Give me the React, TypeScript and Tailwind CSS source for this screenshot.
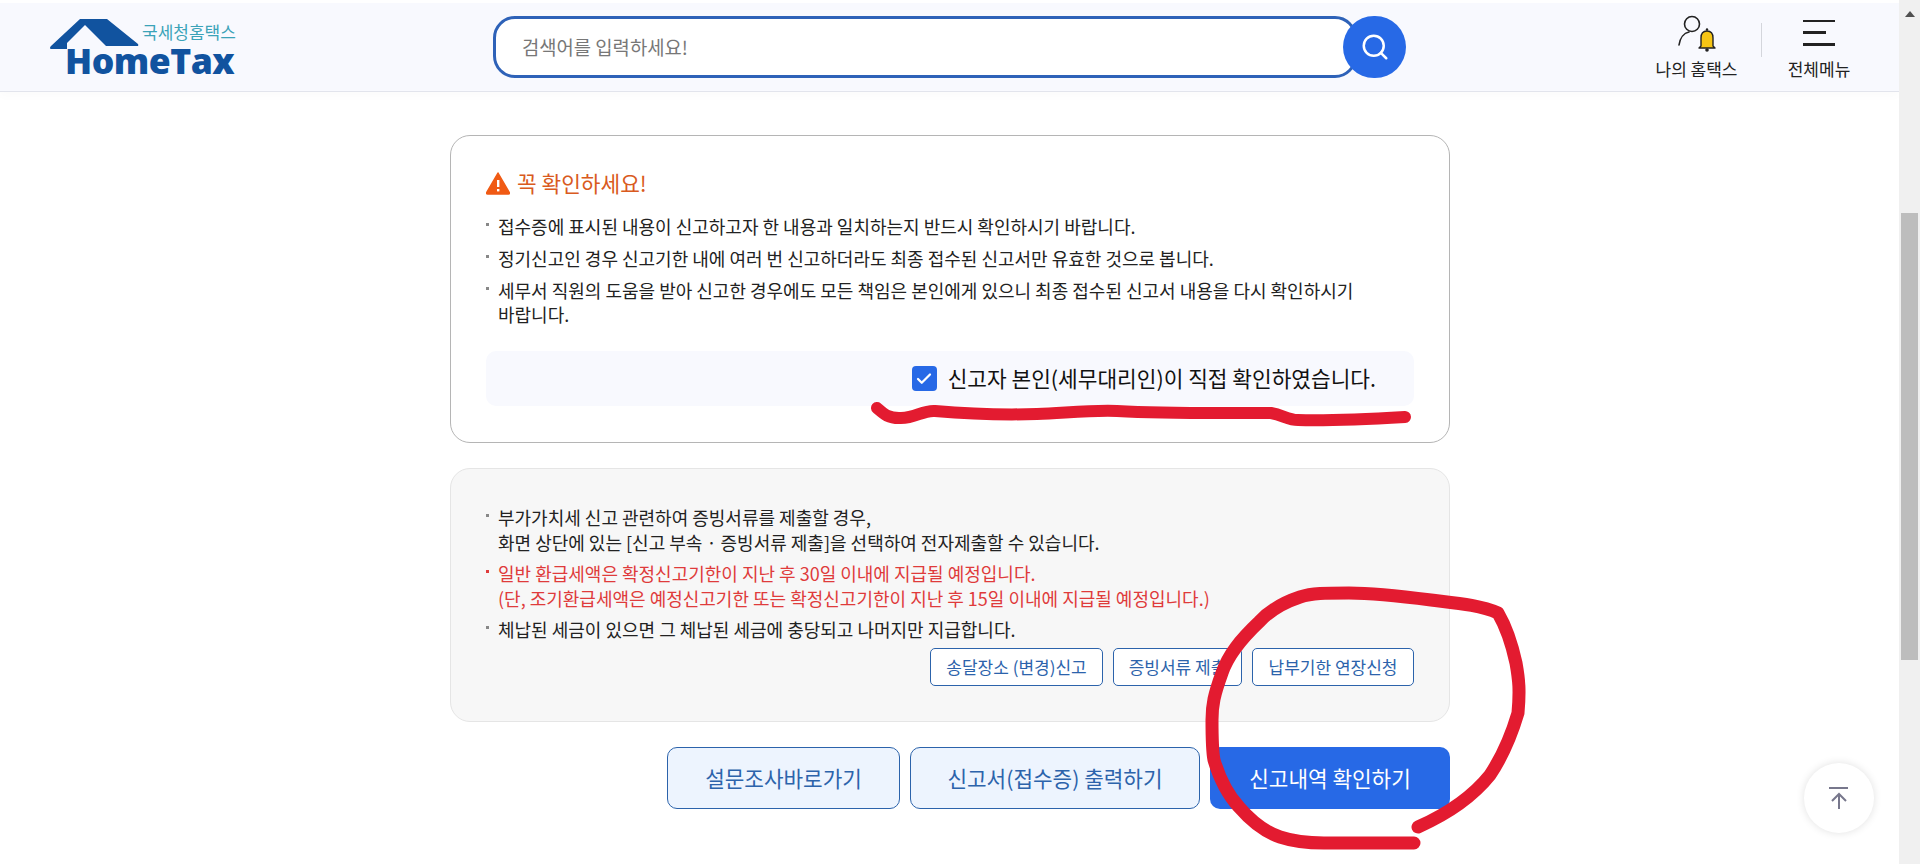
import { Check, Search } from "lucide-react";

function Logo() {
  return (
    <div className="relative w-[190px] h-[60px] shrink-0">
      <svg className="absolute left-0 top-0" width="100" height="40" viewBox="0 0 100 40">
        <path d="M0 31 Q0 30 1 29 L30 2 L57 2 L88 27 Q89 29 87 29 L56 29 L35 8 L17 26 L17 32 L1 32 Q0 32 0 31Z" fill="#11539f" />
      </svg>
      <span className="absolute left-[15px] top-[30px] text-[35.5px] leading-[26px] font-extrabold text-[#11539f] font-['Open_Sans',sans-serif] tracking-[-0.5px] whitespace-nowrap">
        HomeTax
      </span>
      <span className="absolute left-[92px] top-[6px] text-[17px] leading-[18px] text-[#3ba3b8] font-['Noto_Sans_CJK_KR',sans-serif] whitespace-nowrap">
        국세청홈택스
      </span>
    </div>
  );
}

function UserBell() {
  return (
    <svg width="40" height="40" viewBox="0 0 40 40" fill="none">
      <circle cx="15" cy="9" r="7.5" stroke="#222" strokeWidth="1.6" />
      <path d="M2 30 C3 23 7 18 12 17" stroke="#222" strokeWidth="1.6" strokeLinecap="round" />
      <path d="M24 31 L24 23 C24 18 27 16 30 16 C33 16 36 18 36 23 L36 31 L38 33 L22 33Z" fill="#f6c515" stroke="#222" strokeWidth="1.4" strokeLinejoin="round" />
      <circle cx="30" cy="14.5" r="1.2" fill="#222" />
      <circle cx="30" cy="35" r="1.8" fill="#222" />
    </svg>
  );
}

function Bullet({ children, red }: { children: React.ReactNode; red?: boolean }) {
  return (
    <li className={`flex ${red ? "text-[#df3b3b]" : "text-[#222]"}`}>
      <span className={`w-[3px] h-[3px] mt-[9px] mr-[9px] shrink-0 ${red ? "bg-[#df3b3b]" : "bg-[#888]"}`} />
      <span>{children}</span>
    </li>
  );
}

function SmallBtn({ label, w }: { label: string; w: string }) {
  return (
    <button className={`${w} h-[38px] rounded-[5px] border border-[#2c63ab] bg-white text-[#2c63ab] text-[17px] leading-[20px] whitespace-nowrap`}>
      {label}
    </button>
  );
}

function Scribbles() {
  return (
    <svg className="absolute left-0 top-0 pointer-events-none" width="1899" height="864" fill="none" stroke="#e31b30" strokeLinecap="round" strokeLinejoin="round">
      <path strokeWidth="12" d="M877 408 C884 414 888 418 899 418 C915 419 922 410 935 411 C970 414 1005 415 1037 414 C1065 413 1090 410 1117 411 C1170 414 1225 413 1271 413 C1283 415 1288 420 1298 420 C1335 421 1370 419 1405 417" />
      <path strokeWidth="13" d="M1418 827 C1445 815 1470 800 1490 775 C1500 760 1510 740 1518 713 C1520 690 1519 680 1516 663 C1511 640 1505 625 1498 613 C1480 605 1455 603 1431 600 C1400 596 1375 593 1349 593 C1325 593 1312 593 1300 597 C1282 603 1270 610 1259 622 C1240 640 1228 655 1222 673 C1214 695 1212 705 1212 720 C1212 735 1212 750 1214 760 C1220 780 1228 795 1239 807 C1252 822 1265 832 1280 837 C1295 842 1310 843 1324 843 C1355 843 1385 843 1414 843" />
    </svg>
  );
}

export default function App() {
  return (
    <div className="relative flex w-full h-[864px] overflow-hidden bg-white font-['Noto_Sans_CJK_KR',sans-serif] text-[#222]">
      <div className="flex-1 flex flex-col min-w-0">
        {/* 헤더 */}
        <header className="mt-[3px] h-[89px] shrink-0 flex items-center bg-[#f8f9fe] border-b border-[#e2e4ec] shadow-[0_4px_10px_rgba(0,0,0,0.02)] pl-[50px] pr-[50px]">
          <Logo />
          <div className="ml-[253px] relative flex items-center">
            <div className="w-[864px] h-[62px] rounded-[22px] border-[3px] border-[#2e62b8] bg-white flex items-center pl-[26px] text-[18.8px] text-[#777]">
              검색어를 입력하세요!
            </div>
            <div className="-ml-[14px] z-10 w-[63px] h-[62px] rounded-full bg-[#2769e6] flex items-center justify-center">
              <Search size={30} color="#fff" strokeWidth={2} />
            </div>
          </div>
          <div className="ml-auto flex items-start">
            <div className="flex flex-col items-center w-[81px]">
              <UserBell />
              <span className="mt-[3px] text-[17px] leading-[22px] whitespace-nowrap">나의 홈택스</span>
            </div>
            <div className="w-px h-[34px] bg-[#d4d6dc] ml-[24px] mt-[8px]" />
            <div className="flex flex-col items-center w-[60px] ml-[27px]">
              <div className="w-[32px] h-[40px] flex flex-col pt-[5px]">
                <div className="h-[2px] w-[32px] bg-[#222]" />
                <div className="h-[3px] w-[23px] bg-[#222] mt-[9px]" />
                <div className="h-[3px] w-[32px] bg-[#222] mt-[9px]" />
              </div>
              <span className="mt-[3px] text-[17px] leading-[22px] whitespace-nowrap">전체메뉴</span>
            </div>
          </div>
        </header>

        {/* 본문 */}
        <main className="w-[1000px] ml-[450px] pt-[43px] flex flex-col">
          <section className="h-[308px] rounded-[20px] border border-[#b5b5b5] pt-[30px] px-[35px]">
            <h2 className="flex items-center gap-[7px] h-[34px] text-[21.4px] text-[#d95a20]">
              <svg width="24" height="24" viewBox="0 0 24 24">
                <path d="M12 2 L23.5 22 Q23.5 23 22.5 23 L1.5 23 Q0.5 23 0.5 22Z" fill="#f05a14" stroke="#f05a14" strokeWidth="1.5" strokeLinejoin="round" />
                <rect x="11" y="9" width="2.4" height="7" fill="#fff" />
                <rect x="11" y="18" width="2.4" height="2.4" fill="#fff" />
              </svg>
              꼭 확인하세요!
            </h2>
            <ul className="mt-[14px] flex flex-col gap-[8px] text-[18px] leading-[24px]">
              <Bullet>접수증에 표시된 내용이 신고하고자 한 내용과 일치하는지 반드시 확인하시기 바랍니다.</Bullet>
              <Bullet>정기신고인 경우 신고기한 내에 여러 번 신고하더라도 최종 접수된 신고서만 유효한 것으로 봅니다.</Bullet>
              <Bullet>
                세무서 직원의 도움을 받아 신고한 경우에도 모든 책임은 본인에게 있으니 최종 접수된 신고서 내용을 다시 확인하시기
                <br />
                바랍니다.
              </Bullet>
            </ul>
            <div className="mt-[25px] h-[55px] rounded-[10px] bg-[#f8f9fe] flex items-center justify-end pr-[38px] gap-[11px]">
              <div className="w-[25px] h-[25px] rounded-[4px] bg-[#2769e6] flex items-center justify-center">
                <Check size={18} color="#fff" strokeWidth={3} />
              </div>
              <span className="mb-[2px] text-[21.4px] leading-[28px] text-[#111]">신고자 본인(세무대리인)이 직접 확인하였습니다.</span>
            </div>
          </section>

          <section className="mt-[25px] h-[254px] rounded-[20px] border border-[#e5e5e5] bg-[#f7f7f7] pt-[36px] px-[35px]">
            <ul className="flex flex-col gap-[6px] text-[18px] leading-[25px]">
              <Bullet>
                부가가치세 신고 관련하여 증빙서류를 제출할 경우,
                <br />
                화면 상단에 있는 [신고 부속 · 증빙서류 제출]을 선택하여 전자제출할 수 있습니다.
              </Bullet>
              <Bullet red>
                일반 환급세액은 확정신고기한이 지난 후 30일 이내에 지급될 예정입니다.
                <br />
                (단, 조기환급세액은 예정신고기한 또는 확정신고기한이 지난 후 15일 이내에 지급될 예정입니다.)
              </Bullet>
              <Bullet>체납된 세금이 있으면 그 체납된 세금에 충당되고 나머지만 지급합니다.</Bullet>
            </ul>
            <div className="mt-[6px] flex justify-end gap-[10px]">
              <SmallBtn label="송달장소 (변경)신고" w="w-[173px]" />
              <SmallBtn label="증빙서류 제출" w="w-[129px]" />
              <SmallBtn label="납부기한 연장신청" w="w-[162px]" />
            </div>
          </section>

          <div className="mt-[25px] flex justify-end gap-[10px]">
            <button className="w-[233px] h-[62px] rounded-[10px] border border-[#2c63ab] bg-[#edf4fe] text-[#2c63ab] text-[21.3px]">설문조사바로가기</button>
            <button className="w-[290px] h-[62px] rounded-[10px] border border-[#2c63ab] bg-[#edf4fe] text-[#2c63ab] text-[21.3px]">신고서(접수증) 출력하기</button>
            <button className="w-[240px] h-[62px] rounded-[10px] bg-[#2769e6] text-white text-[21.3px]">신고내역 확인하기</button>
          </div>
        </main>
      </div>

      {/* 스크롤바 */}
      <div className="w-[21px] shrink-0 bg-[#f0f0f0] flex flex-col items-center">
        <div className="h-[21px] mt-[3px] w-full flex items-center justify-center">
          <div className="w-0 h-0 border-x-[5px] border-x-transparent border-b-[6px] border-b-[#505050]" />
        </div>
        <div className="mt-[189px] w-[17px] h-[447px] bg-[#bdbdbd]" />
      </div>

      {/* 맨 위로 */}
      <button className="absolute left-[1804px] top-[763px] w-[70px] h-[70px] rounded-full bg-white shadow-[0_0_8px_rgba(0,0,0,0.12)] flex items-center justify-center">
        <svg width="22" height="24" viewBox="0 0 22 24" fill="none" stroke="#77778c" strokeWidth="2">
          <path d="M1 2 H20" />
          <path d="M11 23 V9 M4 15 L11 8 L18 15" />
        </svg>
      </button>

      <Scribbles />
    </div>
  );
}
